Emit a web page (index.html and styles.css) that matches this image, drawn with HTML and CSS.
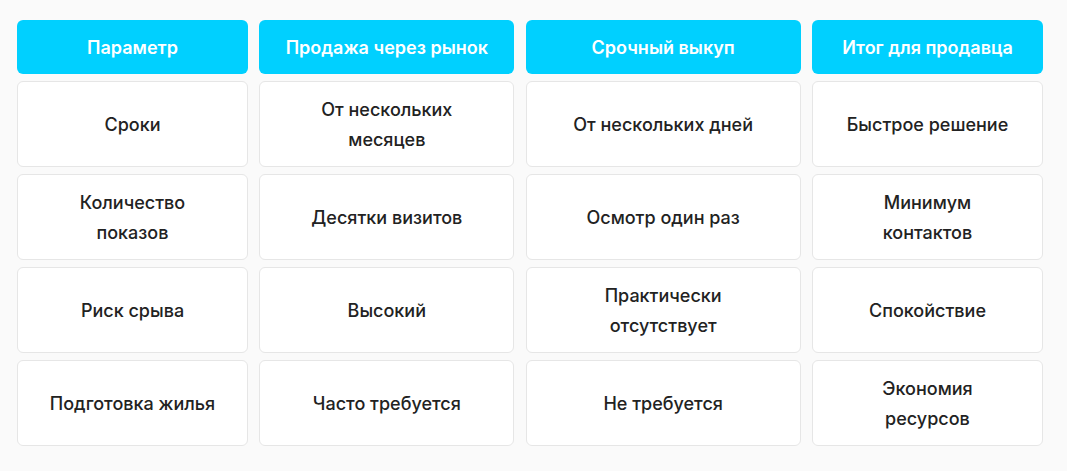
FILE: index.html
```html
<!DOCTYPE html>
<html lang="ru">
<head>
<meta charset="utf-8">
<link rel="stylesheet" href="styles.css">
</head>
<body>
<div class="table">
  <div class="th">Параметр</div>
  <div class="th">Продажа через рынок</div>
  <div class="th">Срочный выкуп</div>
  <div class="th">Итог для продавца</div>

  <div class="td">Сроки</div>
  <div class="td">От нескольких месяцев</div>
  <div class="td">От нескольких дней</div>
  <div class="td">Быстрое решение</div>

  <div class="td">Количество показов</div>
  <div class="td">Десятки визитов</div>
  <div class="td">Осмотр один раз</div>
  <div class="td">Минимум контактов</div>

  <div class="td">Риск срыва</div>
  <div class="td">Высокий</div>
  <div class="td">Практически отсутствует</div>
  <div class="td">Спокойствие</div>

  <div class="td">Подготовка жилья</div>
  <div class="td">Часто требуется</div>
  <div class="td">Не требуется</div>
  <div class="td">Экономия ресурсов</div>
</div>
</body>
</html>
```

FILE: styles.css
```css
html, body {
  margin: 0;
  padding: 0;
  background: #fafafa;
}
body {
  font-family: "Inter", "Noto Sans", sans-serif;
  color: #222;
}
.table {
  display: grid;
  grid-template-columns: 231px 255px 275px 231px;
  column-gap: 11.33px;
  row-gap: 7px;
  grid-auto-rows: 86px;
  grid-template-rows: 54px;
  padding: 20px 0 0 17px;
}
.th {
  background: #00d0ff;
  color: #fff;
  font-weight: 600;
  font-size: 18px;
  border-radius: 6px;
  display: flex;
  align-items: center;
  justify-content: center;
  text-align: center;
}
.td {
  background: #fff;
  border: 1px solid #e6e6e6;
  border-radius: 6px;
  display: flex;
  align-items: center;
  justify-content: center;
  text-align: center;
  font-size: 18px;
  font-weight: 500;
  line-height: 30px;
  padding: 2px 30px 0;
}
```
